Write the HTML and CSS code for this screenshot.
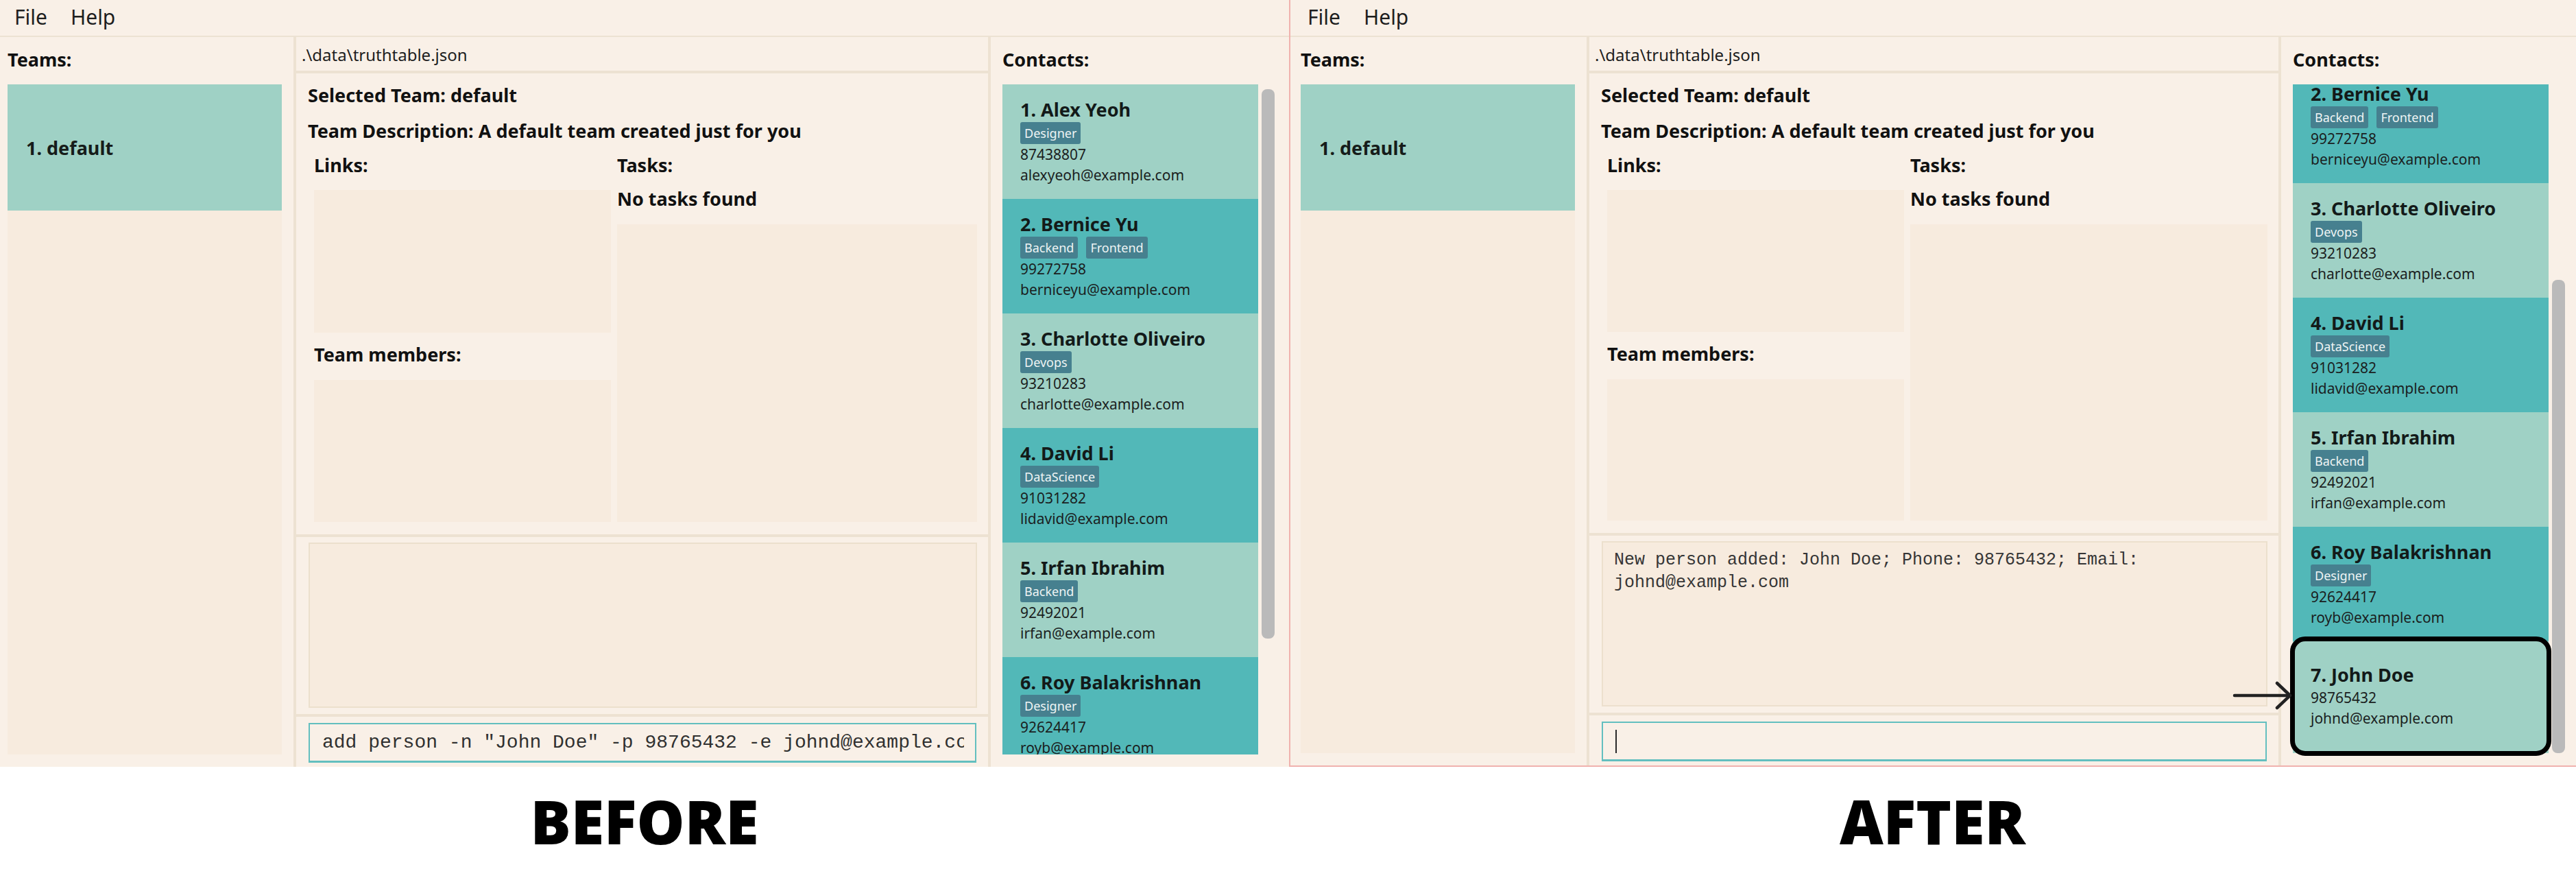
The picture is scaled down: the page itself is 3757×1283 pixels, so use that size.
FILE: index.html
```html
<!DOCTYPE html>
<html lang="en">
<head>
<meta charset="utf-8">
<title>Before / After</title>
<link rel="stylesheet" href="styles.css">
</head>
<body>
<div class="screens">

  <section class="shot shot-before">
    <div class="app">
      <div class="menubar"><span class="menu-item">File</span><span class="menu-item">Help</span></div>
      <div class="main">
        <aside class="teams">
          <h2 class="pane-title">Teams:</h2>
          <div class="team-list"><div class="team-card">1. default</div></div>
        </aside>
        <div class="center">
          <div class="path">.\data\truthtable.json</div>
          <div class="info">
            <h3 class="info-title">Selected Team: default</h3>
            <h3 class="info-title desc">Team Description: A default team created just for you</h3>
            <div class="info-grid">
              <div class="info-col">
                <h4 class="label">Links:</h4>
                <div class="box box-links"></div>
                <h4 class="label label-members">Team members:</h4>
                <div class="box box-members"></div>
              </div>
              <div class="info-col">
                <h4 class="label">Tasks:</h4>
                <h4 class="label label-empty">No tasks found</h4>
                <div class="box box-tasks"></div>
              </div>
            </div>
          </div>
          <div class="result-pane"><div class="result-box"></div></div>
          <div class="command-pane"><div class="command-box"><div class="command-text">add person -n "John Doe" -p 98765432 -e johnd@example.com</div></div></div>
        </div>
        <aside class="contacts">
          <h2 class="pane-title">Contacts:</h2>
          <div class="contact-area">
            <div class="contact-viewport">
              <div class="contact-list">
                <div class="card card-light"><div class="name">1. Alex Yeoh</div><div class="tags"><span class="tag">Designer</span></div><div class="line">87438807</div><div class="line">alexyeoh@example.com</div></div>
                <div class="card card-dark"><div class="name">2. Bernice Yu</div><div class="tags"><span class="tag">Backend</span><span class="tag">Frontend</span></div><div class="line">99272758</div><div class="line">berniceyu@example.com</div></div>
                <div class="card card-light"><div class="name">3. Charlotte Oliveiro</div><div class="tags"><span class="tag">Devops</span></div><div class="line">93210283</div><div class="line">charlotte@example.com</div></div>
                <div class="card card-dark"><div class="name">4. David Li</div><div class="tags"><span class="tag">DataScience</span></div><div class="line">91031282</div><div class="line">lidavid@example.com</div></div>
                <div class="card card-light"><div class="name">5. Irfan Ibrahim</div><div class="tags"><span class="tag">Backend</span></div><div class="line">92492021</div><div class="line">irfan@example.com</div></div>
                <div class="card card-dark"><div class="name">6. Roy Balakrishnan</div><div class="tags"><span class="tag">Designer</span></div><div class="line">92624417</div><div class="line">royb@example.com</div></div>
              </div>
            </div>
            <div class="scroll-track"><div class="scroll-thumb thumb-top"></div></div>
          </div>
        </aside>
      </div>
    </div>
    <div class="caption">BEFORE</div>
  </section>

  <section class="shot shot-after">
    <div class="app app-after">
      <div class="menubar"><span class="menu-item">File</span><span class="menu-item">Help</span></div>
      <div class="main">
        <aside class="teams">
          <h2 class="pane-title">Teams:</h2>
          <div class="team-list"><div class="team-card">1. default</div></div>
        </aside>
        <div class="center">
          <div class="path">.\data\truthtable.json</div>
          <div class="info">
            <h3 class="info-title">Selected Team: default</h3>
            <h3 class="info-title desc">Team Description: A default team created just for you</h3>
            <div class="info-grid">
              <div class="info-col">
                <h4 class="label">Links:</h4>
                <div class="box box-links"></div>
                <h4 class="label label-members">Team members:</h4>
                <div class="box box-members"></div>
              </div>
              <div class="info-col">
                <h4 class="label">Tasks:</h4>
                <h4 class="label label-empty">No tasks found</h4>
                <div class="box box-tasks"></div>
              </div>
            </div>
          </div>
          <div class="result-pane"><div class="result-box">New person added: John Doe; Phone: 98765432; Email: johnd@example.com</div></div>
          <div class="command-pane"><div class="command-box"><div class="command-text"><span class="caret"></span></div></div></div>
        </div>
        <aside class="contacts">
          <h2 class="pane-title">Contacts:</h2>
          <div class="contact-area">
            <div class="contact-viewport">
              <div class="contact-list scrolled-end">
                <div class="card card-dark"><div class="name">2. Bernice Yu</div><div class="tags"><span class="tag">Backend</span><span class="tag">Frontend</span></div><div class="line">99272758</div><div class="line">berniceyu@example.com</div></div>
                <div class="card card-light"><div class="name">3. Charlotte Oliveiro</div><div class="tags"><span class="tag">Devops</span></div><div class="line">93210283</div><div class="line">charlotte@example.com</div></div>
                <div class="card card-dark"><div class="name">4. David Li</div><div class="tags"><span class="tag">DataScience</span></div><div class="line">91031282</div><div class="line">lidavid@example.com</div></div>
                <div class="card card-light"><div class="name">5. Irfan Ibrahim</div><div class="tags"><span class="tag">Backend</span></div><div class="line">92492021</div><div class="line">irfan@example.com</div></div>
                <div class="card card-dark"><div class="name">6. Roy Balakrishnan</div><div class="tags"><span class="tag">Designer</span></div><div class="line">92624417</div><div class="line">royb@example.com</div></div>
                <div class="card card-light card-new"><div class="name">7. John Doe</div><div class="line line-first">98765432</div><div class="line">johnd@example.com</div></div>
              </div>
            </div>
            <div class="scroll-track"><div class="scroll-thumb thumb-end"></div></div>
          </div>
        </aside>
      </div>
      <div class="highlight"></div>
      <svg class="pointer" width="90" height="46" viewBox="0 0 90 46" aria-hidden="true">
        <path d="M4 23 H84" fill="none" stroke="#222" stroke-width="4.5" stroke-linecap="round"/>
        <path d="M66 5 L85 23 L66 41" fill="none" stroke="#222" stroke-width="4.5" stroke-linecap="round" stroke-linejoin="round"/>
      </svg>
    </div>
    <div class="caption">AFTER</div>
  </section>

</div>
</body>
</html>
```

FILE: styles.css
```css
* { box-sizing: border-box; margin: 0; padding: 0; }

html, body { background: #ffffff; }

body {
  width: 3757px;
  height: 1283px;
  overflow: hidden;
  font-family: "Noto Sans", "Open Sans", sans-serif;
  color: #161616;
}

.screens { display: flex; }

.shot { display: flex; flex-direction: column; }
.shot-before { width: 1880px; }
.shot-after { flex: 1; min-width: 0; }

.app {
  position: relative;
  height: 1118px;
  background: #f9f0e7;
  display: flex;
  flex-direction: column;
  overflow: hidden;
}
.app-after {
  border-left: 2px solid #f0b2ae;
  border-bottom: 2px solid #f0b2ae;
}

/* menu */
.menubar {
  height: 54px;
  flex: none;
  display: flex;
  gap: 34px;
  padding-left: 21px;
  border-bottom: 2px solid #ece2d3;
  font-size: 30px;
  line-height: 50px;
  color: #1e1e1e;
}
.app-after .menubar { padding-left: 25px; }

.main { flex: 1; display: flex; min-height: 0; }

/* teams */
.teams {
  width: 428px;
  flex: none;
  display: flex;
  flex-direction: column;
  padding: 14px 17px 18px 11px;
}
.app-after .teams { width: 432px; padding-left: 15px; }
.pane-title {
  font-size: 27px;
  font-weight: 700;
  line-height: 38px;
  color: #111;
}
.team-list {
  flex: 1;
  margin-top: 17px;
  background: #f7ebde;
}
.team-card {
  height: 184px;
  display: flex;
  align-items: center;
  padding-left: 27px;
  background: #9fd1c5;
  font-size: 27px;
  font-weight: 700;
  color: #161c1a;
}

/* center */
.center {
  width: 1013px;
  flex: none;
  display: flex;
  flex-direction: column;
  border-left: 4px solid #ede2d2;
}
.app-after .center { width: 1009px; }
.path {
  height: 53px;
  flex: none;
  padding: 10px 0 0 8px;
  font-size: 24px;
  line-height: 32px;
  color: #1e1e1e;
  border-bottom: 4px solid #ede2d2;
}
.info {
  flex: 1;
  display: flex;
  flex-direction: column;
  padding: 13px 16px 18px 17px;
  border-bottom: 4px solid #ede2d2;
}
.info-title {
  font-size: 27px;
  font-weight: 700;
  line-height: 38px;
  color: #111;
  white-space: nowrap;
}
.info-title.desc { margin-top: 14px; }
.info-grid {
  flex: 1;
  display: grid;
  grid-template-columns: 433px 1fr;
  column-gap: 9px;
  margin-top: 12px;
  padding-left: 9px;
}
.info-col { display: flex; flex-direction: column; }
.label {
  font-size: 27px;
  font-weight: 700;
  line-height: 38px;
  color: #111;
}
.label-members { margin-top: 13px; }
.label-empty { margin-top: 11px; }
.box { flex: 1; background: #f7ebde; }
.box-links { margin-top: 17px; }
.box-members { margin-top: 18px; }
.box-tasks { margin-top: 18px; }

.result-pane {
  height: 262px;
  flex: none;
  padding: 8px 16px 9px 18px;
  border-bottom: 4px solid #ede2d2;
}
.result-box {
  height: 100%;
  border: 2px solid #ece0cd;
  background: #f7ebde;
  padding: 9px 16px;
  font-family: "Liberation Mono", "Courier New", monospace;
  font-size: 25px;
  line-height: 33px;
  color: #363636;
}

.command-pane {
  height: 73px;
  flex: none;
  padding: 9px 17px 0 18px;
}
.command-box {
  height: 58px;
  border: 2px solid #63bfbf;
  border-bottom-width: 3px;
  background: #f9f0e7;
  padding: 9px 16px 0 18px;
}
.command-text {
  overflow: hidden;
  white-space: nowrap;
  font-family: "Liberation Mono", "Courier New", monospace;
  font-size: 28px;
  line-height: 36px;
  height: 36px;
  color: #303030;
}
.caret {
  display: inline-block;
  width: 2px;
  height: 34px;
  background: #2a2a2a;
  vertical-align: top;
  margin-top: 1px;
}

/* contacts */
.contacts {
  flex: 1;
  min-width: 0;
  display: flex;
  flex-direction: column;
  padding: 14px 0 18px 17px;
  border-left: 4px solid #ede2d2;
}
.contact-area {
  flex: 1;
  display: flex;
  gap: 5px;
  margin-top: 17px;
  min-height: 0;
}
.contact-viewport {
  width: 373px;
  flex: none;
  overflow: hidden;
}
.contact-list.scrolled-end { margin-top: -23px; }

.card {
  height: 167px;
  padding: 22px 26px 0;
}
.card-light { background: #9fd1c5; }
.card-dark { background: #52b8b8; }
.name {
  font-size: 27px;
  font-weight: 700;
  line-height: 30px;
  color: #131a19;
  white-space: nowrap;
}
.tags {
  display: flex;
  gap: 12px;
  margin-top: 3px;
  height: 32px;
}
.tag {
  display: block;
  height: 32px;
  padding: 0 6px;
  border-radius: 3px;
  background: #46808f;
  color: #eef4f4;
  font-size: 18px;
  line-height: 32px;
}
.line {
  font-size: 21px;
  line-height: 30px;
  color: #1b1f1f;
  white-space: nowrap;
}
.card-new { padding-top: 34px; }
.card-new .line-first { margin-top: 3px; }

.scroll-track { width: 19px; flex: none; }
.scroll-thumb {
  width: 19px;
  border-radius: 8px;
  background: #bababa;
}
.thumb-top { margin-top: 7px; height: 801px; }
.thumb-end { margin-top: 285px; height: 690px; }

/* annotation overlays */
.highlight {
  position: absolute;
  left: 1458px;
  top: 928px;
  width: 381px;
  height: 174px;
  border: 7px solid #000;
  border-radius: 22px;
}
.pointer {
  position: absolute;
  left: 1373px;
  top: 991px;
}

/* captions */
.caption {
  padding-top: 35px;
  text-align: center;
  font-family: "Open Sans", "Noto Sans", sans-serif;
  font-weight: 800;
  font-size: 88px;
  line-height: 88px;
  color: #000;
}
```
